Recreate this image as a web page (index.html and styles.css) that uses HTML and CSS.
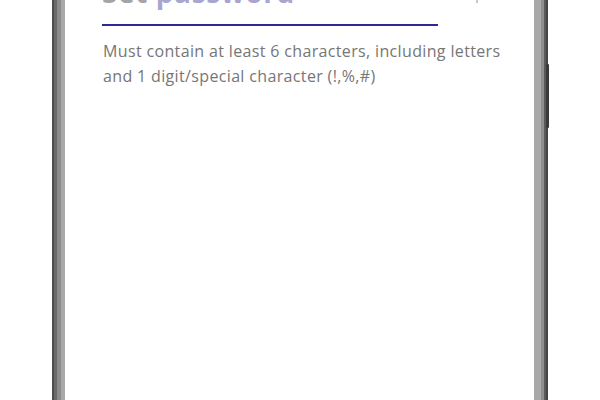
FILE: index.html
```html
<!DOCTYPE html>
<html lang="en">
<head>
<meta charset="utf-8">
<title>Set password</title>
<link rel="stylesheet" href="styles.css">
</head>
<body>
<div class="stage">
  <div class="phone">
    <div class="bezel-left"></div>
    <div class="screen">
      <div class="field">
        <h1 class="title"><span class="t-gray">Set </span><span class="t-tint">password</span></h1>
      </div>
      <p class="hint">Must contain at least 6 characters, including letters and 1 digit/special character (!,%,#)</p>
      <span class="corner-mark"></span>
    </div>
    <div class="bezel-right"></div>
    <span class="side-button"></span>
  </div>
</div>
</body>
</html>
```

FILE: styles.css
```css
html, body {
  margin: 0;
  padding: 0;
  background: #ffffff;
}

.stage {
  height: 400px;
  overflow: hidden;
  display: flex;
  padding-left: 52px;
}

.phone {
  position: relative;
  width: 496px;
  height: 400px;
  display: flex;
}

.bezel-left {
  width: 13px;
  flex: none;
  background: linear-gradient(to right,
    #4e4e4e 0, #4e4e4e 2px,
    #6a6a6a 2px, #6a6a6a 5px,
    #8c8c8c 5px, #8c8c8c 9px,
    #a9a9a9 9px, #a9a9a9 13px);
}

.bezel-right {
  width: 14px;
  flex: none;
  background: linear-gradient(to right,
    #a8a8a8 0, #a8a8a8 7px,
    #8e8e8e 7px, #8e8e8e 10px,
    #5a5a5a 10px, #5a5a5a 12px,
    #444444 12px, #444444 14px);
}

.side-button {
  position: absolute;
  left: 494px;
  top: 64px;
  width: 3px;
  height: 64px;
  background: #3a3a3a;
  border-radius: 1px;
}

.screen {
  position: relative;
  flex: 1;
  background: #ffffff;
  padding-left: 37px;
  font-family: "Open Sans", "Noto Sans", sans-serif;
}

.field {
  width: 336px;
  border-bottom: 2px solid #2c2a8e;
  margin-top: -23px;
  padding-bottom: 17px;
}

.title {
  margin: 0;
  font-size: 28px;
  line-height: 30px;
  font-weight: 700;
  letter-spacing: 0.6px;
}

.t-gray {
  color: #a3a3a8;
}

.t-tint {
  color: #a8a5cf;
}

.hint {
  margin: 13px 0 0 1px;
  width: 410px;
  font-size: 16px;
  line-height: 25px;
  letter-spacing: 0.35px;
  color: #767676;
}

.corner-mark {
  position: absolute;
  left: 411px;
  top: 0;
  width: 2px;
  height: 3px;
  background: #c8c8c8;
}
```
